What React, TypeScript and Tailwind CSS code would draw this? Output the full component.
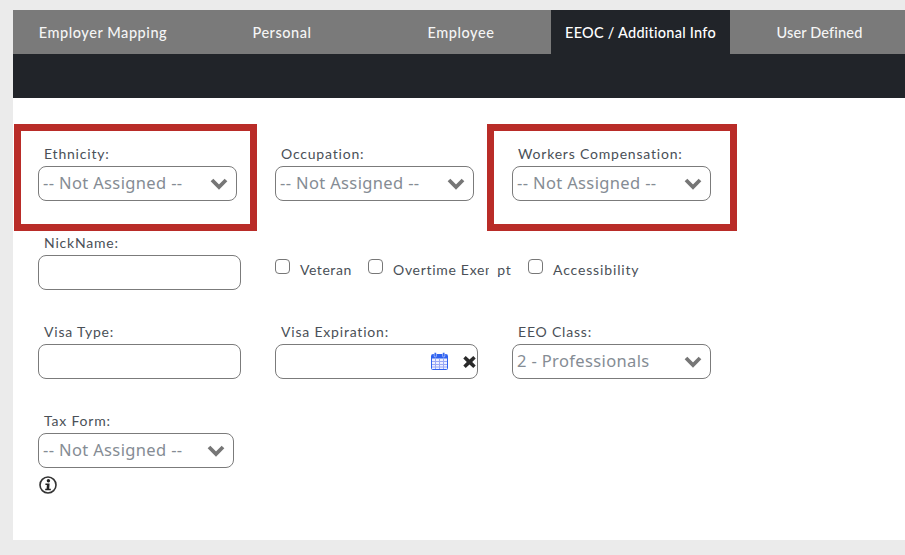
import React from "react";

const labelCls = "block h-[12px] pl-[6px] text-[14px] leading-[12px] tracking-[0.8px] text-[#4a5057] whitespace-nowrap font-['Lato',sans-serif]";

function Chevron() {
  return (
    <svg width="18" height="13" viewBox="0 0 18 13" className="shrink-0">
      <path d="M2 3 L9 10 L16 3" fill="none" stroke="#767676" strokeWidth="3.8" />
    </svg>
  );
}

function Field({ label, width, children }: { label: string; width: string; children: React.ReactNode }) {
  return (
    <div className={`${width} flex flex-col gap-[6px]`}>
      <span className={labelCls}>{label}</span>
      {children}
    </div>
  );
}

function Select({ value }: { value: string }) {
  return (
    <div className="h-[35px] flex items-center justify-between pl-[4px] pr-[8px] rounded-[8px] border border-[#7b7b7b] bg-white">
      <span className="text-[16.5px] tracking-[0.36px] leading-none text-[#858c94] whitespace-nowrap font-['Noto_Sans',sans-serif]">{value}</span>
      <Chevron />
    </div>
  );
}

function Check({ label, textClass }: { label: string; textClass: string }) {
  return (
    <div className="flex items-start">
      <span className="w-[15px] h-[15px] rounded-[4px] border border-[#777] bg-white" />
      <span className={`${textClass} ml-[10px] mt-[3px] text-[14px] leading-[16px] text-[#4a5057] whitespace-nowrap font-['Lato',sans-serif]`}>{label}</span>
    </div>
  );
}

export default function App() {
  return (
    <div className="relative w-[905px] h-[555px] overflow-hidden bg-[#ebebeb] pt-[10px] pl-[13px] pb-[15px]">
      <div className="h-[530px] bg-white">
        <div className="flex h-[44px] overflow-hidden bg-[#7a7a7a] text-[14.5px] font-medium text-[#f5f5f5] font-['Lato',sans-serif]">
          <div className="w-[180px] shrink-0 flex items-center justify-center pt-[2px] tracking-[0.55px]">Employer Mapping</div>
          <div className="w-[178px] shrink-0 flex items-center justify-center pt-[2px] tracking-[0.55px]">Personal</div>
          <div className="w-[180px] shrink-0 flex items-center justify-center pt-[2px] tracking-[0.55px]">Employee</div>
          <div className="w-[179px] shrink-0 flex items-center justify-center pt-[2px] tracking-[0.25px] bg-[#212429] text-white">EEOC / Additional Info</div>
          <div className="w-[179px] shrink-0 flex items-center justify-center pt-[2px] tracking-[0.15px]">User Defined</div>
        </div>
        <div className="h-[44px] bg-[#212429]" />

        <div className="pl-[25px] pt-[50px] flex flex-col">
          <div className="flex gap-[38px] h-[89px]">
            <Field label="Ethnicity:" width="w-[199px]"><Select value="-- Not Assigned --" /></Field>
            <Field label="Occupation:" width="w-[199px]"><Select value="-- Not Assigned --" /></Field>
            <Field label="Workers Compensation:" width="w-[199px]"><Select value="-- Not Assigned --" /></Field>
          </div>

          <div className="flex h-[89px]">
            <Field label="NickName:" width="w-[203px]">
              <div className="h-[35px] rounded-[8px] border border-[#7b7b7b] bg-white" />
            </Field>
            <div className="ml-[34px] pt-[22px] flex items-start gap-[17px] h-fit">
              <Check label="Veteran" textClass="w-[51px] tracking-[0.55px]" />
              <div className="relative">
                <Check label="Overtime Exempt" textClass="w-[118px] tracking-[0.7px]" />
                <span className="absolute left-[121px] top-0 w-[8px] h-[22px] bg-white" />
                <span className="absolute left-[130px] top-[16px] w-[1px] h-[2px] bg-[#6a5a80]" />
              </div>
              <Check label="Accessibility" textClass="w-[86px] tracking-[0.85px]" />
            </div>
          </div>

          <div className="flex h-[89px]">
            <Field label="Visa Type:" width="w-[203px]">
              <div className="h-[35px] rounded-[8px] border border-[#7b7b7b] bg-white" />
            </Field>
            <div className="ml-[34px]">
              <Field label="Visa Expiration:" width="w-[203px]">
                <div className="h-[35px] flex items-center rounded-[8px] border border-[#7b7b7b] bg-white pl-[155px] pb-[2px]">
                  <svg width="17" height="18" viewBox="0 0 17 18" className="shrink-0">
                    <rect x="0.5" y="2.5" width="16" height="15" rx="1" fill="#eef0ff" stroke="#2f62f0" />
                    <rect x="1" y="3" width="15" height="3.5" fill="#2f62f0" />
                    <path d="M1 9.5H16M1 12.5H16M1 15H16M4.5 7V17M8.5 7V17M12.5 7V17" stroke="#9aa8f5" strokeWidth="1" />
                    <rect x="3.2" y="0.5" width="2.2" height="4.5" rx="1" fill="#2f62f0" stroke="#fff" strokeWidth="0.5" />
                    <rect x="11.6" y="0.5" width="2.2" height="4.5" rx="1" fill="#2f62f0" stroke="#fff" strokeWidth="0.5" />
                  </svg>
                  <svg width="13" height="12" viewBox="0 0 13 12" className="ml-[15px] mt-[2px] shrink-0">
                    <path d="M0.3 2.5 L2.7 0 L6.5 3.5 L10.3 0 L12.7 2.5 L9.2 6 L12.7 9.5 L10.3 12 L6.5 8.5 L2.7 12 L0.3 9.5 L3.8 6 Z" fill="#2a2a2a" />
                  </svg>
                </div>
              </Field>
            </div>
            <div className="ml-[34px]">
              <Field label="EEO Class:" width="w-[199px]"><Select value="2 - Professionals" /></Field>
            </div>
          </div>

          <div className="flex flex-col">
            <Field label="Tax Form:" width="w-[196px]"><Select value="-- Not Assigned --" /></Field>
            <svg width="18" height="18" viewBox="0 0 18 18" className="ml-[1px] mt-[8px]">
              <circle cx="9" cy="9" r="8" fill="#fff" stroke="#333" strokeWidth="1.6" />
              <circle cx="9.4" cy="4.8" r="1.7" fill="#222" />
              <path d="M6.4 7.6H10.6L10.2 12.8H11.8V14.3H6.2V12.8H7.6L7.9 9.1H6.4Z" fill="#222" />
            </svg>
          </div>
        </div>
      </div>

      <div className="absolute left-[13.5px] top-[124px] w-[243.5px] h-[106.5px] border-[7px] border-[#b92c28] pointer-events-none" />
      <div className="absolute left-[486.5px] top-[124px] w-[250px] h-[106.5px] border-[7px] border-[#b92c28] pointer-events-none" />
    </div>
  );
}
